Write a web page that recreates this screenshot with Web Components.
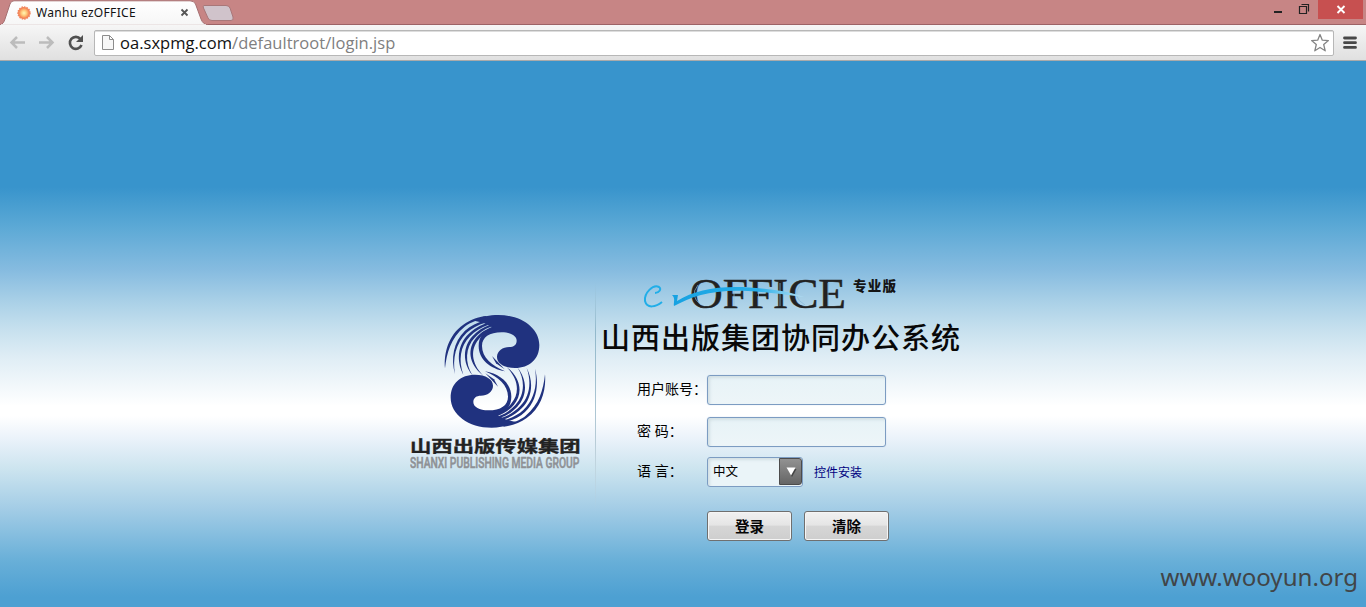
<!DOCTYPE html>
<html lang="zh-CN">
<head>
<meta charset="utf-8">
<title>Wanhu ezOFFICE</title>
<style>
html,body{margin:0;height:100%;overflow:hidden}
body{font-family:"Noto Sans","Noto Sans CJK SC",sans-serif}
</style>
</head>
<body>
<app-window></app-window>
<script>
const define=(name,css,html)=>customElements.define(name,class extends HTMLElement{
  constructor(){
    super();
    const t=document.createElement('template');
    t.innerHTML=`<style>*{box-sizing:border-box}svg{display:block}${css}</style>${html}`;
    this.attachShadow({mode:'open'}).appendChild(t.content.cloneNode(true));
  }
});

define('tab-strip',`
:host{display:flex;height:25px;background:linear-gradient(#c78585 24px,#9c6265 24px);position:relative;justify-content:space-between}
.tabs{display:flex;position:relative}
.shape{position:absolute;left:0;top:0}
.tab{position:relative;display:flex;align-items:center;width:203px;height:25px;padding-left:17px}
.title{font-size:12px;letter-spacing:.32px;line-height:25px;margin-left:5px;width:144px;color:#111}
.win{display:flex;height:19px}
`,`
<div class="tabs">
<svg class="shape" width="240" height="25"><defs><linearGradient id="g" x2="0" y2="1"><stop offset="0" stop-color="#fff"/><stop offset="1" stop-color="#f6f6f6"/></linearGradient></defs>
<path d="M0 25C3 24 4 22 5 19L10 4Q11 .8 14 .8H190Q194 .8 195.500 4L201 19Q203 24.500 208 25Z" fill="url(#g)" stroke="#a56f71"/><path d="M1 25H206" stroke="#f6f6f6" stroke-width="1.500"/>
<path d="M204 5.500H226Q229 5.500 230 8L233 17Q234 20.500 231 20.500H212Q209 20.500 208 18L203.500 8Q202.500 5.500 204 5.500Z" fill="#d0c3cb" stroke="#a87779"/></svg>
<div class="tab">
<svg width="14" height="14"><defs><radialGradient id="s"><stop offset="0" stop-color="#fff6b8"/><stop offset=".4" stop-color="#ffcf80"/><stop offset="1" stop-color="#f36d45"/></radialGradient></defs><circle cx="7" cy="7" r="6" fill="url(#s)" stroke="#f0875e" stroke-width="1.500" stroke-dasharray="1.500 1"/></svg>
<span class="title">Wanhu ezOFFICE</span>
<svg width="9" height="9"><path d="M1.500 1.500L7.500 7.500M7.500 1.500L1.500 7.500" stroke="#555" stroke-width="1.800"/></svg>
</div></div>
<div class="win"><svg width="106" height="24">
<rect x="58" width="45" height="19" fill="#c75050"/>
<path d="M14 12H22" stroke="#222" stroke-width="2"/>
<path d="M39.500 6.500H46.500V13.500H39.500ZM41.500 4.500H48.500V11.500" fill="none" stroke="#222" stroke-width="1.200"/>
<path d="M77.500 6L84.500 13M84.500 6L77.500 13" stroke="#fff" stroke-width="1.900"/></svg></div>
`);

define('browser-toolbar',`
:host{display:flex;align-items:flex-start;height:36px;padding:5px 9px 0 9px;background:linear-gradient(#f6f6f6,#e0e0e0);border-bottom:1px solid #aaa}
.nav{width:85px;height:27px;flex:none}
.omni{display:flex;flex:1;height:26px;border:1px solid #b7b7b7;border-radius:2px;background:#fff;box-shadow:inset 0 1px #ddd;align-items:center;padding:0 3px 0 7px}
.url{font:16.500px/23px "Open Sans","Noto Sans",sans-serif;letter-spacing:.03px;color:#111;flex:1;margin-left:5px;height:25px;white-space:nowrap}
.url span{color:#808080}
.menu{margin:6px 0 0 9px}
`,`
<svg class="nav" viewBox="9 30 85 27"><g fill="none" stroke="#bcbcbc" stroke-width="2.500"><path d="M25 42.500H12M17 37L11.500 42.500L17 48M39 42.500H52M47 37L52.500 42.500L47 48"/></g><path d="M80.500 39A6 6 0 1 0 81.500 45" fill="none" stroke="#505050" stroke-width="2.600"/><path d="M83 35V42H76Z" fill="#505050"/></svg>
<div class="omni"><svg width="13" height="16"><path d="M.500 .500H7.500L11.500 4.500V14.500H.500ZM7.500 .500V4.500H11.500" fill="#f7f7f7" stroke="#8c8c8c"/></svg>
<div class="url">oa.sxpmg.com<span>/defaultroot/login.jsp</span></div>
<svg width="20" height="20" viewBox="0 0 20 20"><path d="M10 1.500L12.300 7.200L18.400 7.600L13.700 11.500L15.200 17.800L10 14.500L4.800 17.800L6.300 11.500L1.600 7.600L7.700 7.200Z" fill="#fff" stroke="#858585" stroke-width="1.300" stroke-linejoin="round"/></svg></div>
<svg class="menu" width="14" height="14"><path d="M1.500 2H12.500M1.500 6.700H12.500M1.500 11.400H12.500" stroke="#484848" stroke-width="2.800" stroke-linecap="round"/></svg>
`);

define('company-logo',`:host{display:block;width:180px;height:180px}`,`
<svg width="180" height="180" viewBox="0 0 540 540"><g transform="translate(-30)">
<defs><g id="half" fill="#20327f">
<path d="M222 62C246 50 268 45 295 45C365 45 418 85 418 135C418 178 388 204 345 204C312 204 291 190 291 171C291 153 308 141 328 141C340 141 350 135 350 122C350 107 332 97 305 97C268 97 246 112 246 138C246 172 275 197 315 214C270 206 236 178 236 138C236 112 250 93 276 82L250 68Z"/>
<path d="M135 205C131 160 145 105 190 74C210 60 235 50 260 48L255 56C225 60 205 71 193 81C152 114 140 160 135 205Z"/>
<path d="M165 222C152 175 160 125 195 92C212 76 232 67 254 62L256 68C234 74 214 85 200 98C167 130 157 175 165 222Z"/>
<path d="M190 224C169 185 172 135 205 103C220 88 240 74 266 68L266 74C242 82 224 94 210 109C180 139 175 182 190 224Z"/>
<path d="M217 225C187 188 188 140 218 108C232 93 250 80 272 74L273 80C252 87 236 100 224 113C196 142 194 188 217 225Z"/>
<path d="M250 227C203 190 203 145 228 114C240 99 258 86 280 80L279 86C262 92 246 104 235 119C212 147 212 188 250 227Z"/>
<path d="M276 168L314 208L288 190Z"/></g></defs>
<use href="#half"/><use href="#half" transform="rotate(180 285 214)"/>
<text x="30" y="455" font-family="Noto Sans CJK SC" font-weight="700" font-size="47" textLength="512" lengthAdjust="spacingAndGlyphs" fill="#222" stroke="#222">山西出版传媒集团</text>
<g transform="translate(30 503) scale(.66 1)"><text font-family="Roboto" font-size="44" font-weight="500" textLength="770" lengthAdjust="spacingAndGlyphs" fill="#8e9195" stroke="#8e9195" stroke-width="1.500">SHANXI PUBLISHING MEDIA GROUP</text></g>
</g></svg>`);

define('product-logo',`:host{display:block;width:365px;height:90px}`,`
<svg width="365" height="90" viewBox="600 270 365 90">
<defs><linearGradient id="w"><stop offset="0" stop-color="#16a2e2"/><stop offset=".65" stop-color="#28aee8"/><stop offset="1" stop-color="#b6e0f4"/></linearGradient></defs>
<text x="689" y="308" font-family="Liberation Serif" font-size="42" textLength="156" lengthAdjust="spacingAndGlyphs" fill="#222" stroke="#222" stroke-width=".5">OFFICE</text>
<path d="M697 285Q688 296 700 305M799 285Q790 297 804 305M733 283V306M757.500 283V306M779 283V306M827 283V306" fill="none" stroke="#86b9d8" stroke-width=".7"/>
<path d="M654 293C658 293 661 289 658 287C652 284 643 293 644 301C646 309 655 307 661 302" fill="none" stroke="#21aee8" stroke-width="2"/>
<path d="M671 295L677 295L676 301C698 287 728 284 770 289.500C786 291 794 294 803 297C779 294 765 292 747 291C713 289 691 296 673 306C672 303 675 299 671 295Z" fill="url(#w)"/>
<text x="852" y="291" font-family="Noto Sans CJK SC" font-weight="900" font-size="13.500" textLength="43" lengthAdjust="spacing" fill="#151515">专业版</text>
<text x="600" y="348.500" font-family="Noto Sans CJK SC" font-weight="500" font-size="29" textLength="359" lengthAdjust="spacing" fill="#080808">山西出版集团协同办公系统</text>
</svg>`);

define('form-row',`
:host{display:flex;align-items:center;height:30px;font-size:14px;color:#000}
.label{width:71px;padding-left:1px;height:30px;line-height:28px;white-space:pre;flex:none}
`,`<div class="label"><slot name="label"></slot></div><slot></slot>`);

define('text-field',`
:host{display:block;width:179px;height:30px;border:1px solid #7c9cc2;border-radius:3px;background:linear-gradient(#e7f3f7,#edf5f8);box-shadow:inset 2px 2px 3px #d2dfe4,0 0 1px #a9c4de}
`,``);

define('select-box',`
:host{display:flex;width:96px;height:30px;border:1px solid #7c9cc2;border-radius:3px;background:#eaf4f8;box-shadow:inset 2px 2px 3px #d2dfe4;font-size:12.500px;line-height:27px}
.v{flex:1;padding-left:5px}
.b{width:23px;height:27px;border:1px solid #4c4c4c;border-radius:0 3px 3px 0;background:linear-gradient(#929292,#656565)}
`,`<div class="v"><slot></slot></div><div class="b"><svg width="21" height="25"><path d="M7 9H16L11.500 17Z" fill="#444" transform="translate(.5 1)"/><path d="M6.500 8.500H15.500L11 16.500Z" fill="#fff"/></svg></div>`);

define('push-button',`
:host{display:flex;align-items:center;justify-content:center;width:85px;height:30px;border:1px solid #6f6f6f;border-radius:3px;background:linear-gradient(#f1f1f1 0%,#e5e5e5 47%,#d6d6d6 50%,#cecece);box-shadow:inset 0 0 0 1px #f5f5f5;font-weight:700;font-size:14.500px;line-height:28px;color:#050505}
`,`<slot></slot>`);

define('login-page',`
:host{display:grid;grid-template-columns:186px 1fr;column-gap:5px;position:relative;height:546px;padding:209px 0 0 410px;align-content:start;background:linear-gradient(#3894cc 0px,#3894cc 126px,#5aa8d5 164px,#87bce0 210px,#a9d0e7 240px,#c6e0ee 268px,#dfedf5 296px,#fff 345px,#fff 355px,#eaf2fa 378px,#cce4ef 408px,#a4cde6 447px,#68afd8 500px,#4da0d2 536px,#4da0d2 546px)}
.left{height:245px;padding-top:30px;border-right:1px solid;border-image:linear-gradient(transparent 5%,#91b8cb 25%,#b7cbd6 70%,transparent 98%) 1}
.right{display:flex;flex-direction:column}
form{display:flex;flex-direction:column;margin:15px 0 0 35px;width:300px}
form-row+form-row{margin-top:12px}
form-row.lang{margin-top:10px}
.link{font-size:12px;color:#000080;margin-left:11px}
.buttons{display:flex;gap:12px;margin:24px 0 0 71px}
.mark{position:absolute;right:8px;bottom:12px;font:24.100px/36px "Noto Sans",sans-serif;color:#414548}
`,`
<div class="left"><company-logo></company-logo></div>
<div class="right"><product-logo></product-logo>
<form>
<form-row><span slot="label">用户账号：</span><text-field></text-field></form-row>
<form-row><span slot="label">密 码：</span><text-field></text-field></form-row>
<form-row class="lang"><span slot="label">语 言：</span><select-box>中文</select-box><span class="link">控件安装</span></form-row>
<div class="buttons"><push-button>登录</push-button><push-button>清除</push-button></div>
</form></div>
<div class="mark">www.wooyun.org</div>
`);

define('app-window',`:host{display:flex;flex-direction:column;width:1366px;height:607px;overflow:hidden}`,`<tab-strip></tab-strip><browser-toolbar></browser-toolbar><login-page></login-page>`);
</script>
</body>
</html>
